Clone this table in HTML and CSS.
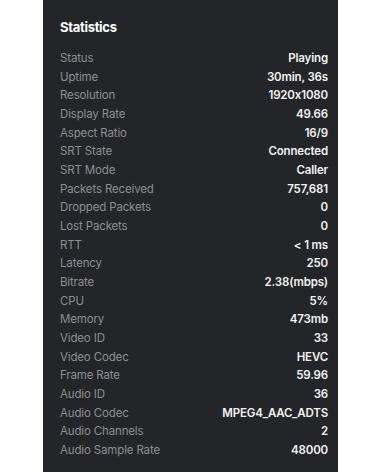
FILE: index.html
```html
<!DOCTYPE html>
<html>
<head>
<meta charset="utf-8">
<link rel="stylesheet" href="styles.css">
</head>
<body>
<div class="panel">
  <div class="title">Statistics</div>
  <div class="rows">
    <div class="row"><span class="k">Status</span><span class="v">Playing</span></div>
    <div class="row"><span class="k">Uptime</span><span class="v">30min, 36s</span></div>
    <div class="row"><span class="k">Resolution</span><span class="v">1920x1080</span></div>
    <div class="row"><span class="k">Display Rate</span><span class="v">49.66</span></div>
    <div class="row"><span class="k">Aspect Ratio</span><span class="v">16/9</span></div>
    <div class="row"><span class="k">SRT State</span><span class="v">Connected</span></div>
    <div class="row"><span class="k">SRT Mode</span><span class="v">Caller</span></div>
    <div class="row"><span class="k">Packets Received</span><span class="v">757,681</span></div>
    <div class="row"><span class="k">Dropped Packets</span><span class="v">0</span></div>
    <div class="row"><span class="k">Lost Packets</span><span class="v">0</span></div>
    <div class="row"><span class="k">RTT</span><span class="v">&lt; 1 ms</span></div>
    <div class="row"><span class="k">Latency</span><span class="v">250</span></div>
    <div class="row"><span class="k">Bitrate</span><span class="v">2.38(mbps)</span></div>
    <div class="row"><span class="k">CPU</span><span class="v">5%</span></div>
    <div class="row"><span class="k">Memory</span><span class="v">473mb</span></div>
    <div class="row"><span class="k">Video ID</span><span class="v">33</span></div>
    <div class="row"><span class="k">Video Codec</span><span class="v">HEVC</span></div>
    <div class="row"><span class="k">Frame Rate</span><span class="v">59.96</span></div>
    <div class="row"><span class="k">Audio ID</span><span class="v">36</span></div>
    <div class="row"><span class="k">Audio Codec</span><span class="v">MPEG4_AAC_ADTS</span></div>
    <div class="row"><span class="k">Audio Channels</span><span class="v">2</span></div>
    <div class="row"><span class="k">Audio Sample Rate</span><span class="v">48000</span></div>
  </div>
</div>
</body>
</html>
```

FILE: styles.css
```css
html, body {
  margin: 0;
  padding: 0;
  background: #ffffff;
}
body {
  width: 381px;
  height: 472px;
  overflow: hidden;
  font-family: Inter, "Open Sans", sans-serif;
  font-feature-settings: "calt" 0;
}
.panel {
  margin-left: 43px;
  width: 295px;
  height: 472px;
  box-sizing: border-box;
  background: #242529;
  padding: 18px 10px 0 17px;
}
.title {
  height: 18px;
  line-height: 18px;
  font-size: 13px;
  font-weight: 700;
  color: #ffffff;
  letter-spacing: -0.3px;
}
.rows {
  margin-top: 12.66px;
  display: flex;
  flex-direction: column;
}
.row {
  height: 18.68px;
  display: flex;
  justify-content: space-between;
  align-items: center;
  font-size: 11.5px;
  letter-spacing: -0.15px;
}
.k {
  color: #8d8e93;
}
.v {
  color: #f2f2f2;
  font-weight: 600;
}
```
